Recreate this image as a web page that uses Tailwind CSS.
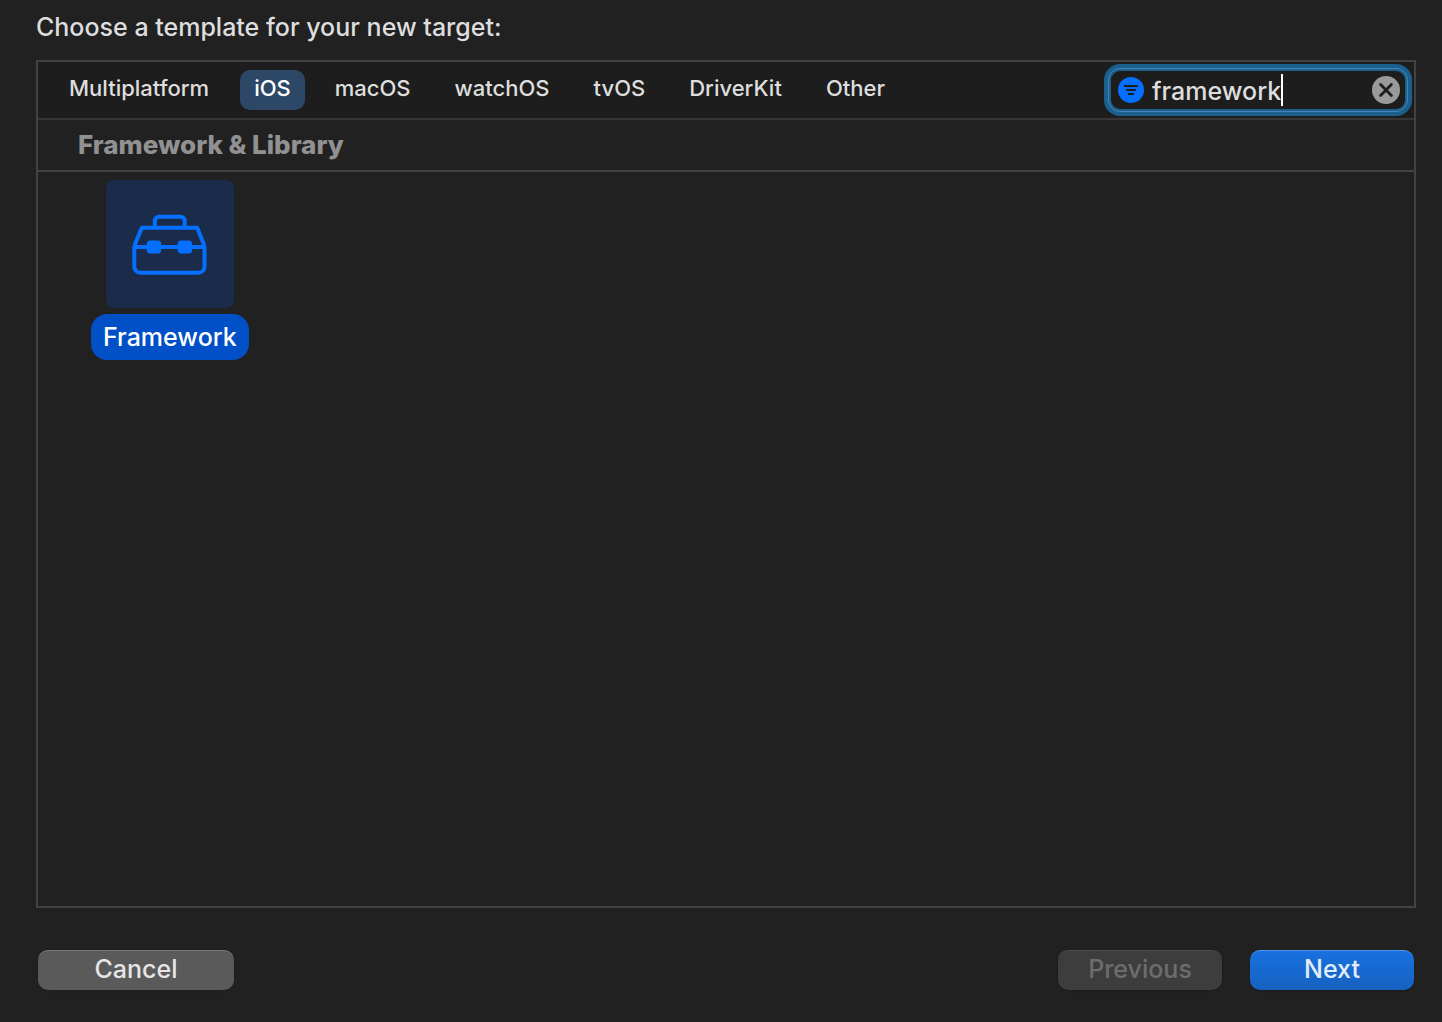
<!DOCTYPE html>
<html lang="en">
<head>
  <meta charset="UTF-8" />
  <meta name="viewport" content="width=device-width, initial-scale=1.0" />
  <title>Choose a template for your new target</title>
  <script src="https://cdn.jsdelivr.net/npm/@tailwindcss/browser@4"></script>
</head>
<body class="bg-[#212121] text-[#dedede] font-medium font-['Inter','Liberation_Sans',sans-serif]">
  <main class="min-h-screen flex flex-col pl-9 pr-[26px] pt-2 pb-8">
    <h1 class="text-[25px] leading-[38px] mb-3.5">Choose a template for your new target:</h1>

    <section class="flex-1 flex flex-col border-2 border-[#424242]">
      <div class="h-[58px] flex items-center justify-between bg-[#1d1d1d] border-b-2 border-[#363636] pl-4 pr-0.5">
        <nav class="flex gap-4 text-[22px] leading-9">
          <button type="button" class="h-10 px-[15px] pb-1 rounded-[10px]">Multiplatform</button>
          <button type="button" class="h-10 px-3.5 pb-1 rounded-[10px] bg-[#2d4867] text-white">iOS</button>
          <button type="button" class="h-10 px-3.5 pb-1 rounded-[10px]">macOS</button>
          <button type="button" class="h-10 px-3.5 pb-1 rounded-[10px]">watchOS</button>
          <button type="button" class="h-10 px-3.5 pb-1 rounded-[10px]">tvOS</button>
          <button type="button" class="h-10 px-3.5 pb-1 rounded-[10px]">DriverKit</button>
          <button type="button" class="h-10 px-3.5 pb-1 rounded-[10px]">Other</button>
        </nav>

        <!-- filter field with focus ring -->
        <div class="w-[308px] rounded-2xl bg-[#1b5f8e] p-1">
          <div class="rounded-xl border border-[#4585b1]">
            <div class="rounded-[11px] p-0.5">
              <div class="h-[38px] flex items-center rounded-[9px] bg-[#1d1d1d] pl-[7px] pr-[5px]">
                <label for="filter" aria-label="Filter">
                  <svg class="size-[26px]" viewBox="0 0 26 26" fill="none">
                    <circle cx="13" cy="13" r="13" fill="#0570ff" />
                    <path d="M6.800 8.900h12.400M8.800 13h8.400M10.800 17.100h4.400" stroke="#1d1d1d" stroke-width="2" stroke-linecap="round" />
                  </svg>
                </label>
                <input id="filter" type="text" value="framework" class="ml-2 pt-0.5 text-[25px] leading-8 field-sizing-content outline-none caret-transparent" />
                <span class="w-0.5 h-8 bg-white"></span>
                <button type="button" aria-label="Clear" class="ml-auto">
                  <svg class="size-7" viewBox="0 0 28 28" fill="none">
                    <circle cx="14" cy="14" r="14" fill="#9a9a9a" />
                    <path d="M8.600 8.600l10.800 10.800M19.400 8.600L8.600 19.400" stroke="#1d1d1d" stroke-width="2.800" stroke-linecap="round" />
                  </svg>
                </button>
              </div>
            </div>
          </div>
        </div>
      </div>

      <h2 class="h-[52px] border-b-2 border-[#424242] pl-10 text-[26px] leading-[50px] font-extrabold text-[#919191]">Framework &amp; Library</h2>

      <div class="flex pl-[53px] pt-2">
        <button type="button" class="flex flex-col items-center gap-1.5">
          <span class="size-32 rounded-lg bg-[#1a2c4a] flex items-center justify-center">
            <svg class="size-20" viewBox="0 0 80 80" fill="none" stroke="#0570ff" stroke-width="4" stroke-linejoin="round">
              <path d="M24.800 23v-6a4.300 4.300 0 0 1 4.300-4.300h21.300a4.300 4.300 0 0 1 4.300 4.300v6" />
              <path d="M4.300 42L11.800 23.700h55.400L74.500 42" />
              <path d="M4.300 42v20.700a6 6 0 0 0 6 6h58.200a6 6 0 0 0 6-6V42" />
              <path d="M4.300 43h70.200" />
              <rect x="16.700" y="36.500" width="14.500" height="13" rx="3.500" fill="#0570ff" stroke="none" />
              <rect x="47.600" y="36.500" width="14.500" height="13" rx="3.500" fill="#0570ff" stroke="none" />
            </svg>
          </span>
          <span class="h-[46px] px-3 rounded-2xl bg-[#0150c8] text-white text-[25px] leading-[46px]">Framework</span>
        </button>
      </div>
    </section>

    <footer class="mt-[42px] px-0.5 flex gap-7 text-[25px] leading-9">
      <button type="button" class="w-[196px] h-10 pb-1 mr-auto rounded-[10px] border-t border-[#7a7a7a] bg-[#5a5a5a] text-[#e6e6e6] shadow-sm">Cancel</button>
      <button type="button" disabled class="w-[164px] h-10 pb-1 rounded-[10px] border-t border-[#4e4e4e] bg-[#3d3d3d] text-[#6d6d6d] shadow-sm">Previous</button>
      <button type="button" class="w-[164px] h-10 pb-1 rounded-[10px] border-t border-[#4c93ea] bg-linear-to-b from-[#1871e0] to-[#1761c0] text-[#e3edfa] shadow-sm">Next</button>
    </footer>
  </main>
</body>
</html>
